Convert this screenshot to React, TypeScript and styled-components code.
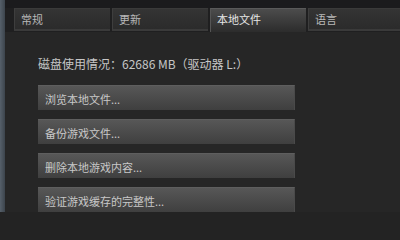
import styled, { createGlobalStyle } from 'styled-components';

const TABS = ['常规', '更新', '本地文件', '语言'];
const ACTIONS = ['浏览本地文件...', '备份游戏文件...', '删除本地游戏内容...', '验证游戏缓存的完整性...'];

const GlobalStyle = createGlobalStyle`
  html, body {
    margin: 0;
    padding: 0;
    background: #232323;
  }
  body {
    font-family: "Noto Sans CJK SC", "Liberation Sans", sans-serif;
  }
`;

const App = () => {
  const active = 2;

  return (
    <>
      <GlobalStyle />
      <Window>
        <Edge />
        <Main>
          <TopStrip />
          <TabBar>
            {TABS.map((tab, i) => (
              <Tab key={tab} $active={i === active}>
                {tab}
              </Tab>
            ))}
            <TabFiller />
          </TabBar>
          <Content>
            <DiskUsage>磁盘使用情况：62686 MB（驱动器 L:）</DiskUsage>
            <Actions>
              {ACTIONS.map((label) => (
                <ActionButton key={label}>{label}</ActionButton>
              ))}
            </Actions>
          </Content>
        </Main>
      </Window>
    </>
  );
};

export default App;

const Window = styled.div`
  display: flex;
  width: 400px;
  height: 212px;
  overflow: hidden;
  background: #252525;
`;

const Edge = styled.div`
  width: 5px;
  flex-shrink: 0;
  background: linear-gradient(to right, #56606a, #3c444c);
`;

const Main = styled.div`
  flex: 1;
  display: flex;
  flex-direction: column;
  background: #242424;
`;

const TopStrip = styled.div`
  height: 8px;
  background: #1b1b1d;
`;

const TabBar = styled.div`
  display: flex;
  align-items: flex-start;
  gap: 2px;
  height: 24px;
  padding-left: 9px;
  background: #1f1f20;
`;

const Tab = styled.div<{ $active: boolean }>`
  width: 96px;
  flex-shrink: 0;
  box-sizing: border-box;
  height: ${(p) => (p.$active ? '24px' : '23px')};
  padding: 2px 0 0 6px;
  font-size: 11px;
  line-height: 17px;
  color: ${(p) => (p.$active ? '#e6e6e6' : '#b8b8b8')};
  background: ${(p) =>
    p.$active
      ? 'linear-gradient(to bottom, #4c4c4c, #2c2c2c)'
      : 'linear-gradient(to bottom, #343434, #2b2b2b)'};
  border-left: 1px solid ${(p) => (p.$active ? '#555' : '#3e3e3e')};
  border-top: 1px solid ${(p) => (p.$active ? '#5a5a5a' : '#3a3a3a')};
  border-bottom: ${(p) => (p.$active ? 'none' : '2px solid #3a3a3a')};
`;

const TabFiller = styled.div`
  flex: 1;
  align-self: stretch;
  border-bottom: 2px solid #3a3a3a;
  box-sizing: border-box;
  height: 23px;
`;

const Content = styled.div`
  display: flex;
  flex-direction: column;
  padding: 24px 0 0 33px;
  background: #262626;
  flex: 1;
`;

const DiskUsage = styled.div`
  font-size: 12px;
  line-height: 16px;
  color: #c6c6c6;
  margin-bottom: 13px;
`;

const Actions = styled.div`
  display: flex;
  flex-direction: column;
  gap: 9px;
`;

const ActionButton = styled.div`
  width: 257px;
  height: 25px;
  box-sizing: border-box;
  padding: 1px 0 0 7px;
  font-size: 11px;
  line-height: 24px;
  color: #c8c8c8;
  background: linear-gradient(to bottom, #575757, #3f3f3f);
  border-top: 1px solid #5e5e5e;
  border-right: 1px solid #4a4a4a;
`;
